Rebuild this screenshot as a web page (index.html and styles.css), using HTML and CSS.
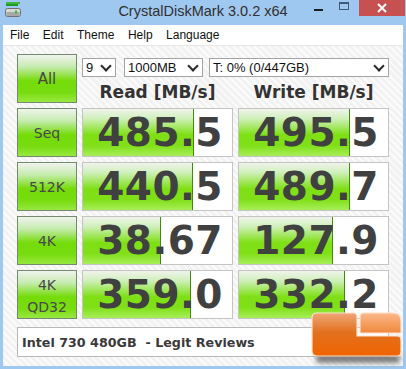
FILE: index.html
```html
<!DOCTYPE html>
<html lang="en">
<head>
    <link rel="stylesheet" href="styles.css">
</head>
<body>
    <div class="window">
        <div class="titleBar">
            <svg class="appIcon" width="16" height="16" viewBox="0 0 16 16">
                <rect x="1" y="0" width="14" height="2" fill="#3cb83c"/>
                <rect x="1" y="2" width="12" height="2" fill="#1e9a1e"/>
                <rect x="0.5" y="6.5" width="15" height="8" rx="2" fill="#d8d8d8" stroke="#707070"/>
                <rect x="1.5" y="10" width="13" height="4" fill="#a8a8a8"/>
                <rect x="10" y="8.5" width="2" height="3" fill="#30c030"/>
            </svg>
            <div class="title">CrystalDiskMark 3.0.2 x64</div>
            <div class="winButtons">
                <div class="winBtn"><span class="minGlyph"></span></div>
                <div class="winBtn"><span class="maxGlyph"></span></div>
                <div class="winBtn closeBtn">
                    <svg width="10" height="10" viewBox="0 0 10 10">
                        <path d="M1 1 L9 9 M9 1 L1 9" stroke="#fff" stroke-width="2"/>
                    </svg>
                </div>
            </div>
        </div>
        <div class="client">
            <div class="menuBar">
                <span class="menuItem">File</span>
                <span class="menuItem">Edit</span>
                <span class="menuItem">Theme</span>
                <span class="menuItem">Help</span>
                <span class="menuItem">Language</span>
            </div>
            <div class="content">
                <div class="grid">
                    <div class="label all">All</div>
                    <div class="topRight">
                        <div class="selects">
                            <div class="select selCount">9<span class="chev"></span></div>
                            <div class="select selSize">1000MB<span class="chev"></span></div>
                            <div class="select selDrive">T: 0% (0/447GB)<span class="chev"></span></div>
                        </div>
                        <div class="headers">
                            <div class="header">Read [MB/s]</div>
                            <div class="header">Write [MB/s]</div>
                        </div>
                    </div>

                    <div class="label">Seq</div>
                    <div class="result"><div class="fill" style="width: 110px"></div><span class="value">485.5</span></div>
                    <div class="result"><div class="fill" style="width: 110px"></div><span class="value">495.5</span></div>

                    <div class="label">512K</div>
                    <div class="result"><div class="fill" style="width: 109px"></div><span class="value">440.5</span></div>
                    <div class="result"><div class="fill" style="width: 110px"></div><span class="value">489.7</span></div>

                    <div class="label">4K</div>
                    <div class="result"><div class="fill" style="width: 77px"></div><span class="value">38.67</span></div>
                    <div class="result"><div class="fill" style="width: 93px"></div><span class="value">127.9</span></div>

                    <div class="label twoLine">4K<br>QD32</div>
                    <div class="result"><div class="fill" style="width: 107px"></div><span class="value">359.0</span></div>
                    <div class="result"><div class="fill" style="width: 105px"></div><span class="value">332.2</span></div>
                </div>
                <div class="comment">Intel 730 480GB&nbsp; - Legit Reviews</div>
            </div>
        </div>
        <svg class="logo" width="98" height="59" viewBox="0 0 98 59">
            <defs>
                <linearGradient id="lrBig" x1="0" y1="0" x2="0" y2="1">
                    <stop offset="0" stop-color="#efa678"/>
                    <stop offset="0.45" stop-color="#e2701e"/>
                    <stop offset="1" stop-color="#f06400"/>
                </linearGradient>
                <linearGradient id="lrSmall" x1="0" y1="0" x2="0" y2="1">
                    <stop offset="0" stop-color="#fbb98a"/>
                    <stop offset="1" stop-color="#f0883c"/>
                </linearGradient>
                <filter id="lrShadow" x="-20%" y="-50%" width="140%" height="200%">
                    <feGaussianBlur stdDeviation="2.5"/>
                </filter>
            </defs>
            <rect x="8" y="44" width="84" height="9" rx="3" fill="#444" opacity="0.7" filter="url(#lrShadow)"/>
            <path d="M9 3 H45 Q49 3 49 7 V26 H89 Q93 26 93 30 V42 Q93 46 89 46 H9 Q4 46 4 41 V8 Q4 3 9 3 Z" fill="url(#lrBig)" stroke="#fde2cc" stroke-width="1.2"/>
            <path d="M56 3 H85 Q93 3 93 11 V23 H52 V7 Q52 3 56 3 Z" fill="url(#lrSmall)" stroke="#fde2cc" stroke-width="1.2"/>
        </svg>
    </div>
</body>
</html>
```

FILE: styles.css
```css
body {
    margin: 0;
    width: 406px;
    height: 369px;
    overflow: hidden;
}

.window {
    position: relative;
    width: 406px;
    height: 369px;
    box-sizing: border-box;
    background-color: #9fc8f0;
    padding: 0 3px 3px 3px;
    display: flex;
    flex-direction: column;
}

.titleBar {
    height: 25px;
    display: flex;
    align-items: flex-start;
    position: relative;
}

.appIcon {
    margin: 2px 0 0 2px;
}

.title {
    position: absolute;
    left: 0;
    right: 0;
    top: 3px;
    text-align: center;
    font-family: "Liberation Sans", Arial, sans-serif;
    font-size: 14.5px;
    color: #2f2f2f;
}

.winButtons {
    margin-left: auto;
    display: flex;
    margin-right: -2px;
}

.winBtn {
    height: 16px;
    width: 26px;
    display: flex;
    align-items: center;
    justify-content: center;
}

.minGlyph {
    width: 9px;
    height: 2px;
    background-color: #1e1e1e;
    margin-top: 4px;
}

.maxGlyph {
    width: 8px;
    height: 5px;
    border: 1px solid #3e5a78;
    border-top-width: 2px;
    margin-top: -4px;
}

.closeBtn {
    width: 46px;
    margin-left: 2px;
    background-color: #c75050;
}

.client {
    flex: 1;
    display: flex;
    flex-direction: column;
    background-color: #f4f4f4;
}

.menuBar {
    height: 20px;
    background-color: #ffffff;
    border-bottom: 1px solid #e6e6e6;
    display: flex;
    align-items: center;
    font-family: "Liberation Sans", Arial, sans-serif;
    font-size: 12px;
    color: #111;
    padding-left: 7px;
    gap: 13.5px;
}

.content {
    flex: 1;
    padding: 8px 0 0 14px;
    background-image: repeating-linear-gradient(45deg, #f2f2f2 0px, #f2f2f2 3px, #fbfbfb 3px, #fbfbfb 5px);
}

.grid {
    display: grid;
    grid-template-columns: 60px 151px 151px;
    grid-auto-rows: 49px;
    column-gap: 5px;
    row-gap: 5px;
}

.label {
    box-sizing: border-box;
    border: 1px solid #748a6c;
    background-image: linear-gradient(#f0f3ee 0%, #c6ecb0 25%, #74dc08 55%, #78dc10 80%, #98e840 100%);
    display: flex;
    align-items: center;
    justify-content: center;
    text-align: center;
    font-family: "DejaVu Sans", sans-serif;
    font-size: 14px;
    color: #484848;
}

.all {
    font-size: 15px;
}

.twoLine {
    line-height: 22px;
    padding-top: 2px;
}

.topRight {
    grid-column: 2 / 4;
    display: flex;
    flex-direction: column;
}

.selects {
    display: flex;
    margin-top: 4px;
    height: 19px;
}

.select {
    position: relative;
    box-sizing: border-box;
    height: 19px;
    background-color: #fff;
    border: 1px solid #a4a4a4;
    font-family: "Liberation Sans", Arial, sans-serif;
    font-size: 13px;
    color: #111;
    padding-left: 3px;
    line-height: 17px;
}

.selCount {
    width: 34px;
}

.selSize {
    width: 79px;
    margin-left: 8px;
}

.selDrive {
    width: 180px;
    margin-left: 6px;
}

.chev {
    position: absolute;
    right: 5px;
    top: 3px;
    width: 6px;
    height: 6px;
    border-right: 2px solid #2a2a2a;
    border-bottom: 2px solid #2a2a2a;
    transform: rotate(45deg);
}

.headers {
    display: flex;
    gap: 5px;
    margin-top: 5px;
}

.header {
    width: 151px;
    text-align: center;
    font-family: "DejaVu Sans", sans-serif;
    font-weight: bold;
    font-size: 17px;
    color: #333;
}

.result {
    position: relative;
    box-sizing: border-box;
    border: 1px solid #c4c4c4;
    background-color: #fff;
    display: flex;
    align-items: center;
    justify-content: flex-end;
    padding-right: 9px;
}

.fill {
    position: absolute;
    left: 0;
    top: 0;
    bottom: 0;
    border-right: 1px solid #3f8c10;
    background-image: linear-gradient(#f0f3ec 0%, #d0f0bc 20%, #7ee014 55%, #80e018 78%, #a8ee58 100%);
}

.value {
    position: relative;
    font-family: "DejaVu Sans", sans-serif;
    font-weight: bold;
    font-size: 39px;
    letter-spacing: 0.5px;
    color: #404040;
    line-height: 1;
}

.comment {
    box-sizing: border-box;
    width: 372px;
    height: 30px;
    margin-top: 8px;
    border: 1px solid #b8b8b8;
    background-color: #fff;
    display: flex;
    align-items: center;
    padding-left: 4px;
    font-family: "DejaVu Sans", sans-serif;
    font-weight: bold;
    font-size: 12.7px;
    color: #3a3a3a;
}

.logo {
    position: absolute;
    left: 308px;
    top: 310px;
}
```
